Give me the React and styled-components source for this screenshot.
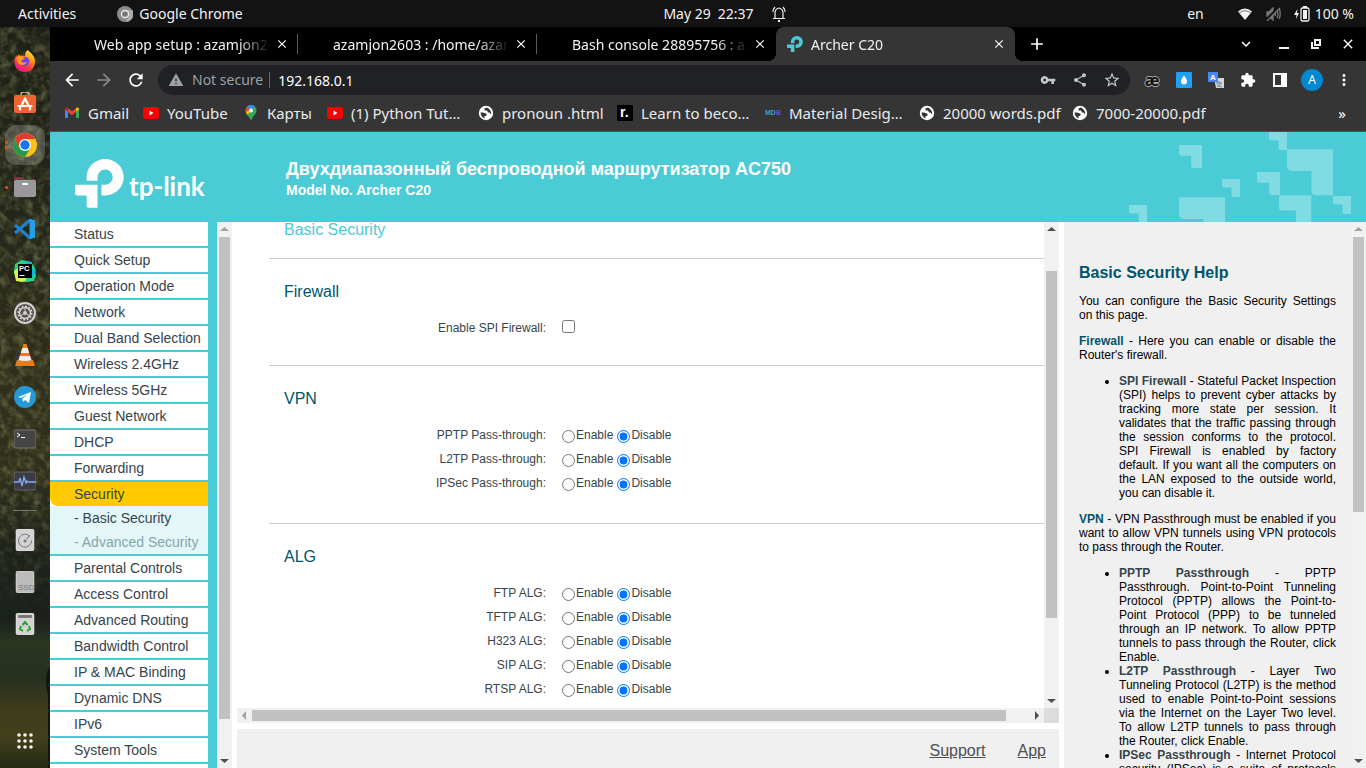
import React from "react";
import styled, { createGlobalStyle, css } from "styled-components";
import {
  MdArrowBack, MdArrowForward, MdRefresh, MdWarning, MdVpnKey, MdShare, MdStarBorder,
  MdExtension, MdMoreVert, MdAdd, MdClose, MdExpandMore,
} from "react-icons/md";

const teal = "#4acbd6";
const uiFont = '"Noto Sans", "Open Sans", sans-serif';
const pageFont = '"Liberation Sans", Arial, sans-serif';

const GlobalStyle = createGlobalStyle`
  * { box-sizing: border-box; }
  body { margin: 0; overflow: hidden; background: #131313; }
  button { border: 0; padding: 0; background: none; color: inherit; font: inherit; }
  svg { display: block; flex: none; }
  ul { margin: 0; padding: 0; }
`;

/* ---------- desktop shell ---------- */

const Desktop = styled.div`
  display: flex;
  flex-direction: column;
  height: 100vh;
  font-family: ${uiFont};
  font-size: 14px;
  color: #f2f2f2;
`;

const TopBar = styled.header`
  display: grid;
  grid-template-columns: 1fr auto 1fr;
  flex: 0 0 27px;
  align-items: center;
  padding: 0 12px 0 18px;
  background: #131313;
  white-space: nowrap;
`;

const BarGroup = styled.div`
  display: flex;
  align-items: center;
  gap: ${(p) => p.$gap || 0}px;
  justify-content: ${(p) => (p.$end ? "flex-end" : "flex-start")};
  padding-left: ${(p) => p.$indent || 0}px;
`;

const AppMenu = styled.button`
  display: flex;
  align-items: center;
  gap: 6px;
`;

const Workspace = styled.div`
  display: flex;
  flex: 1;
  min-height: 0;
`;

const Dock = styled.nav`
  position: relative;
  display: flex;
  flex-direction: column;
  align-items: center;
  flex: 0 0 50px;
  padding: 13px 0 6px;
  overflow: hidden;
  background: linear-gradient(#1e2116 0%, #23261a 25%, #2e2e1b 45%, #2f2f1b 60%, #1c211b 72%, #1b211c 80%, #2b3520 83%, #27301f 88%, #3e3d1c 92%, #413f1b 96%, #242a14 100%);
`;

const Foliage = styled.svg`
  position: absolute;
  inset: 0;
`;

const DockItem = styled.button`
  position: relative;
  display: flex;
  align-items: center;
  justify-content: center;
  flex: 0 0 42px;
  width: 42px;
`;

const DockTile = styled.span`
  display: flex;
  align-items: center;
  justify-content: center;
  width: 40px;
  height: 40px;
  border-radius: 12px;
  background: ${(p) => (p.$active ? "rgba(255,255,255,0.2)" : "none")};
`;

const RunDots = styled.span`
  position: absolute;
  left: 1px;
  display: grid;
  gap: 2px;
  i { width: 3px; height: 3px; border-radius: 50%; background: #e95420; }
`;

const DockDivider = styled.hr`
  position: relative;
  flex: 0 0 1px;
  width: 24px;
  margin: 8px 0;
  border: 0;
  background: #77776c;
`;

const Spacer = styled.div`
  flex: 1;
`;

/* ---------- browser ---------- */

const Browser = styled.section`
  display: flex;
  flex-direction: column;
  flex: 1;
  min-width: 0;
`;

const TabStrip = styled.div`
  display: flex;
  flex: 0 0 34px;
  align-items: center;
  padding: 0 2px 0 9px;
  background: #000;
`;

const Tab = styled.div`
  position: relative;
  display: flex;
  align-items: center;
  flex: 0 1 239px;
  height: 34px;
  min-width: 0;
  padding: 0 8px 0 ${(p) => (p.$active ? 11 : 35)}px;
  border-radius: 8px 8px 0 0;
  ${(p) => p.$active && css`
    background: #353535;
    &::before, &::after {
      content: "";
      position: absolute;
      bottom: 0;
      width: 8px;
      height: 8px;
    }
    &::before { right: 100%; background: radial-gradient(circle at 0 0, #000 8px, #353535 8px); }
    &::after { left: 100%; background: radial-gradient(circle at 100% 0, #000 8px, #353535 8px); }
  `}
  ${(p) => p.$divided && css`
    &::after {
      content: "";
      position: absolute;
      right: 0;
      width: 1px;
      height: 20px;
      background: #5c5c5c;
    }
  `}
`;

const TabTitle = styled.span`
  flex: 1;
  overflow: hidden;
  white-space: nowrap;
  margin: 0 4px 0 ${(p) => (p.$icon ? 8 : 0)}px;
  mask-image: linear-gradient(90deg, #000 82%, transparent);
`;

const IconButton = styled.button`
  display: flex;
  align-items: center;
  justify-content: center;
  flex: 0 0 ${(p) => p.$w || 32}px;
  height: ${(p) => p.$h || 30}px;
  color: ${(p) => p.$color || "#fff"};
`;

const Toolbar = styled.div`
  display: flex;
  align-items: center;
  flex: 0 0 38px;
  padding: 0 6px;
  background: #353535;
`;

const AddressBar = styled.div`
  display: flex;
  align-items: center;
  flex: 1;
  height: 30px;
  margin: 0 6px;
  padding: 0 2px 0 10px;
  border-radius: 15px;
  background: #202124;
`;

const SecurityChip = styled.button`
  display: flex;
  align-items: center;
  gap: 8px;
  padding-right: 6px;
  border-right: 1px solid #6a6b6e;
  line-height: 16px;
  color: #9aa0a6;
  white-space: nowrap;
`;

const UrlInput = styled.input`
  flex: 1;
  min-width: 0;
  padding: 0 0 0 8px;
  border: 0;
  outline: 0;
  background: none;
  color: #fff;
  font: inherit;
`;

const Avatar = styled.span`
  width: 22px;
  height: 22px;
  border-radius: 50%;
  background: #0288d1;
  font-size: 12px;
  line-height: 22px;
  text-align: center;
`;

const AshIcon = styled.span`
  color: #111;
  font-size: 16px;
  font-weight: 700;
  line-height: 20px;
  text-shadow: 1px 0 #aaa, -1px 0 #aaa, 0 1px #aaa, 0 -1px #aaa;
`;

const Bookmarks = styled.nav`
  display: flex;
  align-items: center;
  flex: 0 0 33px;
  padding: 0 8px 4px 14px;
  border-bottom: 1px solid #555;
  background: #353535;
  font-size: 15px;
`;

const Bookmark = styled.a`
  display: flex;
  align-items: center;
  flex: 0 1 ${(p) => p.$w}px;
  gap: 8px;
  min-width: 0;
  color: #e8eaed;
  text-decoration: none;
  white-space: nowrap;
`;

/* ---------- router page ---------- */

const Banner = styled.header`
  display: flex;
  flex: 0 0 90px;
  align-items: center;
  padding-right: 15px;
  background: ${teal};
  color: #fff;
  font-family: ${pageFont};
`;

const Brand = styled.div`
  display: flex;
  align-items: center;
  gap: 5px;
  flex: 0 0 236px;
  padding: 13px 0 0 25px;
`;

const BrandName = styled.span`
  padding-top: 4px;
  font-family: Lato, sans-serif;
  font-size: 26px;
  line-height: 32px;
  font-weight: 700;
`;

const Model = styled.div`
  flex: 1;
  padding-top: 3px;
  font-weight: 700;
  white-space: nowrap;
  h1 { margin: 0; font-size: 18px; line-height: 22px; }
  p { margin: 0; font-size: 14px; line-height: 20px; }
`;

const Frames = styled.div`
  display: grid;
  grid-template-columns: 182px minmax(0, 1fr) 302px;
  grid-template-rows: minmax(0, 1fr);
  flex: 1;
  min-height: 0;
  background: #fff;
  color: #36444b;
  font-family: ${pageFont};
`;

const MenuFrame = styled.aside`
  display: flex;
  min-height: 0;
  background: ${teal};
`;

const Menu = styled.ul`
  flex: 1;
  margin-right: 9px;
  overflow: hidden;
  list-style: none;
`;

const MenuItem = styled.li`
  border-bottom: ${(p) => (p.$open ? 0 : 2)}px solid ${teal};
  background: ${(p) => (p.$sub ? "#e3f7f9" : "#fff")};
`;

const MenuLink = styled.a`
  display: block;
  height: 24px;
  padding-left: 24px;
  border-radius: ${(p) => (p.$active ? "0 0 0 8px" : 0)};
  background: ${(p) => (p.$active ? "#ffcb00" : "none")};
  color: ${(p) => (p.$muted ? "#86a5aa" : "#36444b")};
  font-size: 14px;
  line-height: 24px;
  text-decoration: none;
  white-space: nowrap;
`;

const Bar = styled.div`
  display: flex;
  align-items: center;
  background: #f1f1f1;
  ${(p) => (p.$across
    ? css`height: 15px; flex: 1;`
    : css`flex: 0 0 15px; width: 15px; flex-direction: column;`)}
`;

const BarArrow = styled.svg`
  flex: 0 0 15px;
  fill: ${(p) => (p.$off ? "#a3a3a3" : "#505050")};
`;

const BarPart = styled.div`
  flex: ${(p) => p.$grow} 1 0;
  ${(p) => (p.$across ? "height" : "width")}: 11px;
  background: ${(p) => (p.$thumb ? "#c1c1c1" : "none")};
`;

const Centre = styled.div`
  display: flex;
  flex-direction: column;
  min-width: 0;
  margin: 0 5px;
`;

const ContentRow = styled.div`
  display: flex;
  flex: 1;
  min-height: 0;
`;

const Content = styled.main`
  flex: 1;
  min-width: 0;
  padding-left: 32px;
  overflow: hidden;
`;

const PageTitle = styled.h2`
  margin: 0;
  padding: 0 15px 18px;
  height: 37px;
  border-bottom: 1px solid #ccc;
  color: ${teal};
  font-size: 16px;
  font-weight: 400;
  line-height: 16px;
`;

const Section = styled.section`
  padding: 23px 0 ${(p) => (p.$compact ? 25 : 28)}px;
  border-bottom: 1px solid #ccc;
  h3 {
    margin: 0 0 14px;
    padding-left: 15px;
    color: #00556b;
    font-size: 16px;
    font-weight: 400;
    line-height: 20px;
  }
`;

const Field = styled.div`
  display: grid;
  grid-template-columns: 277px 1fr;
  column-gap: 16px;
  align-items: center;
  height: 24px;
  font-size: 12px;
`;

const FieldLabel = styled.label`
  text-align: right;
`;

const Choices = styled.div`
  display: flex;
  gap: 4px;
  input { margin: 3px 1px 0 0; }
  label { display: flex; line-height: 16px; }
`;

const Tick = styled.input`
  margin: 0 0 3px;
`;

const BottomBar = styled.div`
  display: flex;
`;

const Corner = styled.div`
  width: 15px;
  height: 15px;
  background: #dcdcdc;
`;

const Footer = styled.footer`
  display: flex;
  justify-content: flex-end;
  gap: 32px;
  flex: 0 0 39px;
  margin-top: 6px;
  padding: 12px 13px 0 0;
  background: #f0f0f0;
  font-size: 16px;
  line-height: 20px;
  a { color: #4f4f4f; }
`;

const HelpFrame = styled.aside`
  display: flex;
  min-height: 0;
  background: #f0f0f0;
`;

const Help = styled.article`
  flex: 1;
  padding: 41px 15px 0;
  overflow: hidden;
  color: #000;
  font-size: 12px;
  line-height: 14px;
  text-align: justify;
  h2 { margin: 0 0 11px; color: #00556b; font-size: 16px; line-height: 20px; }
  p, ul { margin: 0 0 12px; }
  p b { color: #00556b; }
  ul { padding-left: 40px; }
  li b { color: #36444b; }
`;

/* ---------- drawings ---------- */

const Icon = ({ size = 22, children, ...rest }) => (
  <svg width={size} height={size} viewBox="0 0 22 22" aria-hidden="true" {...rest}>{children}</svg>
);

const Firefox = () => (
  <Icon>
    <defs>
      <linearGradient id="ff" x1="0.8" y1="0" x2="0.3" y2="1">
        <stop offset="0" stopColor="#fff44f" /><stop offset="0.35" stopColor="#ff980e" />
        <stop offset="0.7" stopColor="#ff3647" /><stop offset="1" stopColor="#e31587" />
      </linearGradient>
    </defs>
    <path fill="url(#ff)" d="M14 0c1 2 4 3 6 7 3 7-1 15-9 15C4 22 0 17 .5 11c.2-3 1-4 2-6l.4 2L5 4l1 2c2-1 3 0 5 0 0-3 1-5 3-6z" />
    <circle cx="10.500" cy="11.500" r="4.800" fill="#7542e5" />
    <path fill="#ff9a1f" d="M3 7c3-2 6 0 8 1-1 2-3 1-4 3 1 2 4 2 6 1-1 3-5 4-8 2-2-2-3-4-2-7z" />
  </Icon>
);

const Software = () => (
  <Icon>
    <path d="M7 4V2c0-3 8-3 8 0v2" fill="none" stroke="#d8c9a2" strokeWidth="1.300" />
    <rect y="3" width="22" height="18" rx="2" fill="#ee6532" />
    <path d="M11 6.500 7.500 13.500M11 6.500 14.500 13.500M4.500 14h13M6 17.500v-2m10 2v-2" fill="none" stroke="#fff" strokeWidth="2.200" strokeLinecap="round" />
  </Icon>
);

const Chrome = () => (
  <Icon size={24}>
    <circle cx="11" cy="11" r="11" fill="#fbc116" />
    <path fill="#e33b2e" d="M1.500 5.500A11 11 0 0 1 20.500 5.500H11L6.200 13.700z" />
    <path fill="#279847" d="M1.500 5.500A11 11 0 0 0 11 22l4.800-8.200-9.500 0z" />
    <circle cx="11" cy="11" r="5.500" fill="#fff" /><circle cx="11" cy="11" r="4.300" fill="#1a73e8" />
  </Icon>
);

const Files = () => (
  <Icon>
    <path d="M0 3q0-2 2-2h7l2 2h9q2 0 2 2v4H0z" fill="#8e2e45" />
    <rect y="4" width="22" height="17" rx="2" fill="#9b979b" />
    <rect x="8" y="7" width="6" height="2" rx="1" fill="#fff" />
  </Icon>
);

const Code = () => (
  <Icon>
    <path d="m1 7 15 13M1 15 16 2" stroke="#1b84cf" strokeWidth="3" />
    <path d="m15.500.500 5.500 2v17l-5.500 2z" fill="#249ee8" />
  </Icon>
);

const PyCharm = () => (
  <Icon>
    <path d="M1 4 8 0l9 2 4 6 1 9-8 5-11-1-3-8z" fill="#21d789" />
    <path d="m13 1 5 1-1 6 5 2-3 9-7-5z" fill="#0bb7da" /><path d="m0 11 6-4 9 13-7 2-6-1z" fill="#dcf249" />
    <path d="m14 14 7 3-1 4-9 1z" fill="#21d789" />
    <rect x="4" y="4" width="14" height="14" fill="#000" />
    <text x="5" y="11" fill="#fff" fontSize="7.500" fontWeight="700" fontFamily="Liberation Sans, sans-serif">PC</text>
    <path d="M5.500 15.500h5" stroke="#fff" />
  </Icon>
);

const Settings = () => (
  <Icon>
    <circle cx="11" cy="11" r="11" fill="#d4d2d0" /><circle cx="11" cy="11" r="9" fill="#53504e" />
    <circle cx="11" cy="11" r="5.500" fill="none" stroke="#d4d2d0" strokeWidth="1.500" />
    <circle cx="11" cy="11" r="6.800" fill="none" stroke="#d4d2d0" strokeWidth="1.500" strokeDasharray="1.800 1.750" />
    <circle cx="11" cy="11" r="2" fill="#d4d2d0" />
    <path d="M11 5v4M6 14l3.500-2M16 14l-3.500-2" stroke="#d4d2d0" />
  </Icon>
);

const Vlc = () => (
  <Icon>
    <path d="m3 16-2 6h20l-2-6z" fill="#f57900" />
    <path d="M9.500 0h3L18 18q-7 3-14 0z" fill="#f57c0b" />
    <path d="m8.300 4-1.500 5h8.400l-1.500-5zM5.800 12l-1.200 4q6.400 2 12.800 0l-1.200-4z" fill="#eee" />
  </Icon>
);

const Telegram = () => (
  <Icon>
    <circle cx="11" cy="11" r="11" fill="#2599d5" />
    <path d="m4 11 13-5-2 11-4-3-2 2-.5-3.500L14 8l-7 4z" fill="#fff" />
  </Icon>
);

const Terminal = () => (
  <Icon>
    <rect y="2" width="22" height="18" rx="2" fill="#454545" stroke="#777" />
    <path d="m3 5 3 2-3 2M7 9.500h4" fill="none" stroke="#fff" />
  </Icon>
);

const Monitor = () => (
  <Icon>
    <rect y="2" width="22" height="18" rx="2" fill="#3b3c45" stroke="#666" />
    <path d="M0 12h5l1-4 2 8 2-9 2 6 1-2 1 1h8" fill="none" stroke="#87a9f5" strokeWidth="1.300" />
  </Icon>
);

const Disk = ({ kind }) => (
  <Icon>
    <rect x="2" width="18" height="22" rx="2" fill={kind === "ssd" ? "#bcbcbc" : "#d3d3d3"} stroke="#eee" strokeWidth="0.500" />
    {kind === "hdd" && <><circle cx="11" cy="12" r="1.500" fill="#777" /><path d="M16 7.500a6.500 6.500 0 1 0 1.500 4M15.500 6.500l-3 4" fill="none" stroke="#777" strokeWidth="1" /></>}
    {kind === "ssd" && <text x="4" y="19" fontSize="8" fill="#777" fontFamily="Liberation Sans, sans-serif">SSD</text>}
    {kind === "trash" && <>
      <rect x="4" y="2" width="14" height="3" rx="1" fill="#777" />
      <path d="m8.500 12 2.500-3 2.500 3M15 13l1 3-3 2M7 13l-1 3 3 2" fill="none" stroke="#2ba02b" strokeWidth="2" />
    </>}
  </Icon>
);

const AppsGrid = () => (
  <Icon fill="#f4f4ee">
    {[5, 11, 17].map((y) => [5, 11, 17].map((x) => <circle key={`${x}-${y}`} cx={x} cy={y} r="1.800" />))}
  </Icon>
);

const Leaves = () => (
  <Foliage width="50" height="741" aria-hidden="true">
    <defs>
      <filter id="leafNoise" x="0" y="0" width="100%" height="100%">
        <feTurbulence type="fractalNoise" baseFrequency="0.120" numOctaves="3" seed="8" />
        <feColorMatrix values="0.6 0 0 0 -0.06  0.6 0 0 0 -0.06  0.3 0 0 0 -0.05  0 2.4 0 0 -0.900" />
      </filter>
      <linearGradient id="leafFade" x1="0" y1="0" x2="0" y2="1">
        <stop offset="0.800" stopColor="#fff" /><stop offset="1" stopColor="#000" />
      </linearGradient>
      <mask id="leafMask"><rect width="50" height="590" fill="url(#leafFade)" /></mask>
    </defs>
    <g mask="url(#leafMask)"><rect width="50" height="590" filter="url(#leafNoise)" opacity="0.450" /></g>
    <ellipse cx="50" cy="655" rx="4" ry="14" fill="#12180f" /><path d="M48 660h2v81h-2z" fill="#12180f" />
  </Foliage>
);

const tpMark = "M110 153V142A56 55 0 1 1 166 197H155V165H166A23 23 0 1 0 143 142V153ZM75 165H143V234H116Q110 234 110 228V197H83Q75 197 75 189Z";
const TpMark = ({ size, fill }) => (
  <svg width={size} height={size} viewBox="75 87 148 148" fill={fill} aria-hidden="true"><path d={tpMark} /></svg>
);

const corners = [
  [657, 6, 54], [387, 45, 69], [711, 58, 138], [621, 126, 69], [516, 147, 54],
  [687, 196, 97], [849, 198, 54], [387, 202, 138], [237, 225, 54],
];
const Corners = () => (
  <svg width="222" height="90" viewBox="237 6 666 270" fill="#81dbe2" aria-hidden="true">
    {corners.map(([x, y, s]) => {
      const a = s * 0.47, r = s * 0.1;
      return <path key={`${x}-${y}`} d={`M${x} ${y}h${s}v${s}h${r - a}q${-r} 0 ${-r} ${-r}V${y + a}H${x + r}q${-r} 0 ${-r} ${-r}z`} />;
    })}
  </svg>
);

const Bell = () => (
  <svg width="14" height="16" viewBox="0 0 14 16" fill="none" stroke="#f2f2f2" strokeWidth="1.200" aria-hidden="true">
    <path d="M3 12V7q0-4 4-5 4 1 4 5v5M1 12.500h12M1 6q0-3 2-5M13 6q0-3-2-5" /><path d="M6 15h2" strokeWidth="2" />
  </svg>
);
const Wifi = () => (
  <svg width="16" height="14" viewBox="0 0 16 14" aria-hidden="true">
    <path d="M1 4.500Q8-1.500 15 4.500L8 13z" fill="#f2f2f2" />
    <path d="M2.300 6q5.700-4.500 11.400 0" fill="none" stroke="#777" />
  </svg>
);
const Muted = () => (
  <svg width="15" height="14" viewBox="0 0 15 14" fill="none" stroke="#777" strokeWidth="1.300" aria-hidden="true">
    <path d="M1 5h2l4-4v12L3 9H1z" fill="#777" /><path d="M9 5q1 2 0 4M11 3q2 4 0 8M13 1q2.500 6 0 11" />
    <path d="M0 13 13 0" stroke="#131313" strokeWidth="2.500" /><path d="M1 14 14 1" />
  </svg>
);
const Battery = () => (
  <svg width="16" height="16" viewBox="0 0 16 16" aria-hidden="true">
    <path d="M3.500 3 0 9h2.500L2 13l3-6H3z" fill="#f2f2f2" />
    <rect x="7" y="2" width="8" height="13" rx="1.500" fill="none" stroke="#f2f2f2" strokeWidth="1.300" />
    <path d="M9 0h4v2H9zM9 4h4v9H9z" fill="#f2f2f2" />
  </svg>
);
const ChromeGrey = () => (
  <svg width="16" height="16" viewBox="0 0 16 16" aria-hidden="true">
    <circle cx="8" cy="8" r="8" fill="#8b8b8b" /><path d="M8 4h7.500a8 8 0 0 1-7 12l3-6" fill="#aaa" />
    <circle cx="8" cy="8" r="3.500" fill="#777" stroke="#eee" strokeWidth="1.300" />
  </svg>
);
const Restore = () => (
  <svg width="10" height="10" viewBox="0 0 10 10" fill="none" stroke="#f2f2f2" strokeWidth="2" aria-hidden="true">
    <path d="M4 1h5v5H4zM1 3v6h7" />
  </svg>
);
const Drop = () => (
  <svg width="16" height="16" viewBox="0 0 16 16" aria-hidden="true">
    <rect width="16" height="16" rx="1" fill="#20a0f0" /><path d="M8 3.500c1.500 2 3 4 3 6a3 3 0 0 1-6 0c0-2 1.500-4 3-6z" fill="#fff" />
  </svg>
);
const Translate = () => (
  <svg width="16" height="16" viewBox="0 0 16 16" fontFamily="Liberation Sans, sans-serif" aria-hidden="true">
    <path d="M6 6h10v10H8z" fill="#d5d8da" /><path d="M0 0h10v10H0z" fill="#4a86ef" />
    <text x="2" y="8" fontSize="8" fontWeight="700" fill="#fff">A</text>
    <path d="M8 11h6M11 9v2M13 11q-1 3-4 4M9 12q2 3 5 3" fill="none" stroke="#6c8196" />
  </svg>
);
const SidePanel = () => (
  <svg width="14" height="14" viewBox="0 0 14 14" aria-hidden="true"><path d="M0 0h14v14H0zM2 2v10h6V2z" fill="#fff" fillRule="evenodd" /></svg>
);

const favicons = {
  gmail: (
    <svg width="16" height="16" viewBox="0 0 16 16" aria-hidden="true">
      <path d="M1 13V4l3 2.500V13z" fill="#4285f4" /><path d="M12 13V6.500L15 4v9z" fill="#34a853" />
      <path d="M3.800 3 8 6.300 12.200 3v4L8 10.300 3.800 7z" fill="#ea4335" />
      <path d="M1 4q0-2 2-1.500l1 .8v3.400L1 4.500z" fill="#c5221f" /><path d="M15 4q0-2-2-1.500l-1 .8v3.400l3-2.200z" fill="#fbbc04" />
    </svg>
  ),
  youtube: (
    <svg width="16" height="16" viewBox="0 0 16 16" aria-hidden="true">
      <rect y="2" width="16" height="12" rx="3" fill="#f00" /><path d="m6.500 5.500 4 2.500-4 2.500z" fill="#fff" />
    </svg>
  ),
  maps: (
    <svg width="16" height="16" viewBox="0 0 16 16" aria-hidden="true">
      <path d="M8 0a5.500 5.500 0 0 1 5.500 5.500c0 4-4.500 6-5.500 10.500C7 11.500 2.500 9.500 2.500 5.500A5.500 5.500 0 0 1 8 0z" fill="#34a853" />
      <path d="M8 0a5.500 5.500 0 0 0-4.200 2L7 5l5-3.500A5 5 0 0 0 8 0z" fill="#4285f4" />
      <path d="M3.800 2a5.500 5.500 0 0 0-1 5L7 5z" fill="#ea4335" /><path d="m2.800 7 1.700 3L10 4 7 5z" fill="#fbbc04" />
      <circle cx="8" cy="5.500" r="2" fill="#fff" />
    </svg>
  ),
  globe: (
    <svg width="16" height="16" viewBox="0 0 16 16" aria-hidden="true">
      <circle cx="8" cy="8" r="7.200" fill="#fff" />
      <path d="M2.500 7.500H5l3 1q1.500 1 0 2.500H6.500v2.500Q3 12 2.500 7.500zM9 2.500 6.500 3.500v2H9l1 2h1.500l1.500 2q1-4-4-7z" fill="#353535" />
    </svg>
  ),
  roadmap: (
    <svg width="16" height="16" viewBox="0 0 16 16" aria-hidden="true">
      <rect width="16" height="16" rx="1" fill="#000" />
      <text x="3" y="12" fontSize="14" fontWeight="700" fill="#fff" fontFamily="Liberation Sans, sans-serif">r.</text>
    </svg>
  ),
  mdb: (
    <svg width="16" height="16" viewBox="0 0 16 16" aria-hidden="true" fontSize="7" fontWeight="700" fontFamily="Liberation Sans, sans-serif">
      <text x="0" y="10" fill="#2f9fe0">MD</text><text x="11" y="10" fill="#6a4bd0">B</text>
    </svg>
  ),
};

/* ---------- data ---------- */

const dockApps = [
  ["Firefox", <Firefox />], ["Ubuntu Software", <Software />], ["Google Chrome", <Chrome />, 2],
  ["Files", <Files />, 1], ["Visual Studio Code", <Code />], ["PyCharm", <PyCharm />],
  ["Settings", <Settings />], ["VLC", <Vlc />], ["Telegram", <Telegram />],
  ["Terminal", <Terminal />], ["System Monitor", <Monitor />],
];
const dockPlaces = [["Disk", <Disk kind="hdd" />], ["SSD", <Disk kind="ssd" />], ["Trash", <Disk kind="trash" />]];

const tabs = ["Web app setup : azamjon2603", "azamjon2603 : /home/azamjon", "Bash console 28895756 : azam"];

const bookmarks = [
  ["gmail", "Gmail", 79], ["youtube", "YouTube", 100], ["maps", "Карты", 84],
  ["youtube", "(1) Python Tut…", 151], ["globe", "pronoun .html", 139], ["roadmap", "Learn to beco…", 148],
  ["mdb", "Material Desig…", 154], ["globe", "20000 words.pdf", 153], ["globe", "7000-20000.pdf", 160],
];

const menu = [
  ["Status"], ["Quick Setup"], ["Operation Mode"], ["Network"], ["Dual Band Selection"],
  ["Wireless 2.4GHz"], ["Wireless 5GHz"], ["Guest Network"], ["DHCP"], ["Forwarding"],
  ["Security", { active: true, open: true }],
  ["- Basic Security", { sub: true, open: true }],
  ["- Advanced Security", { sub: true, muted: true }],
  ["Parental Controls"], ["Access Control"], ["Advanced Routing"], ["Bandwidth Control"],
  ["IP & MAC Binding"], ["Dynamic DNS"], ["IPv6"], ["System Tools"], ["Logout"],
];

const arrows = { up: "M3 9h9L7.500 5z", down: "M3 6h9L7.500 10z", left: "M9 3v9L5 7.500z", right: "M6 3v9l4-4.500z" };

const Scrollbar = ({ across, parts, startOff }) => (
  <Bar $across={across} aria-hidden="true">
    <BarArrow $off={startOff} width="15" height="15"><path d={across ? arrows.left : arrows.up} /></BarArrow>
    {parts.map((n, i) => <BarPart key={i} $grow={n} $across={across} $thumb={i === 1} />)}
    <BarArrow width="15" height="15"><path d={across ? arrows.right : arrows.down} /></BarArrow>
  </Bar>
);

const DockButton = ({ name, icon, dots = 0 }) => (
  <DockItem aria-label={name}>
    {dots > 0 && <RunDots>{Array.from({ length: dots }, (_, i) => <i key={i} />)}</RunDots>}
    <DockTile $active={dots === 2}>{icon}</DockTile>
  </DockItem>
);

const Toggle = ({ name }) => (
  <Field role="radiogroup" aria-label={name}>
    <FieldLabel as="span">{name}:</FieldLabel>
    <Choices>
      <label><input type="radio" name={name} />Enable</label>
      <label><input type="radio" name={name} defaultChecked />Disable</label>
    </Choices>
  </Field>
);

export default function App() {
  return (
    <Desktop>
      <GlobalStyle />
      <TopBar>
        <BarGroup $gap={41}>
          <button>Activities</button>
          <AppMenu><ChromeGrey />Google Chrome</AppMenu>
        </BarGroup>
        <BarGroup $gap={18} $indent={77}><span>May 29&ensp;22:37</span><Bell /></BarGroup>
        <BarGroup $end $gap={13}>
          <BarGroup $gap={33}><span>en</span><Wifi /></BarGroup>
          <Muted />
          <BarGroup $gap={5}><Battery /><span>100 %</span></BarGroup>
        </BarGroup>
      </TopBar>

      <Workspace>
        <Dock aria-label="Dock">
          <Leaves />
          {dockApps.map(([name, icon, dots]) => <DockButton key={name} name={name} icon={icon} dots={dots} />)}
          <DockDivider />
          {dockPlaces.map(([name, icon]) => <DockButton key={name} name={name} icon={icon} />)}
          <Spacer />
          <DockButton name="Show applications" icon={<AppsGrid />} />
        </Dock>

        <Browser>
          <TabStrip>
            {tabs.map((t, i) => (
              <Tab key={t} $divided={i < 2}>
                <TabTitle>{t}</TabTitle>
                <IconButton $w={16} aria-label="Close tab"><MdClose size={14} /></IconButton>
              </Tab>
            ))}
            <Tab $active>
              <TpMark size={16} fill={teal} />
              <TabTitle $icon>Archer C20</TabTitle>
              <IconButton $w={16} aria-label="Close tab"><MdClose size={14} /></IconButton>
            </Tab>
            <IconButton $w={44} aria-label="New tab"><MdAdd size={20} /></IconButton>
            <Spacer />
            <IconButton $w={44} aria-label="Search tabs"><MdExpandMore size={18} /></IconButton>
            <IconButton aria-label="Minimize"><svg width="10" height="10"><path d="M0 8h10v2H0z" fill="#f2f2f2" /></svg></IconButton>
            <IconButton aria-label="Restore"><Restore /></IconButton>
            <IconButton aria-label="Close"><MdClose size={16} /></IconButton>
          </TabStrip>

          <Toolbar>
            <IconButton aria-label="Back"><MdArrowBack size={20} /></IconButton>
            <IconButton $color="#8a8a8a" aria-label="Forward"><MdArrowForward size={20} /></IconButton>
            <IconButton aria-label="Reload"><MdRefresh size={20} /></IconButton>
            <AddressBar>
              <SecurityChip><MdWarning size={16} />Not secure</SecurityChip>
              <UrlInput aria-label="Address" defaultValue="192.168.0.1" />
              <IconButton $color="#c3c5c8" aria-label="Passwords"><MdVpnKey size={16} /></IconButton>
              <IconButton $color="#c3c5c8" aria-label="Share"><MdShare size={16} /></IconButton>
              <IconButton $color="#c3c5c8" aria-label="Bookmark"><MdStarBorder size={18} /></IconButton>
            </AddressBar>
            <IconButton aria-label="Ash extension"><AshIcon>æ</AshIcon></IconButton>
            <IconButton aria-label="Drop extension"><Drop /></IconButton>
            <IconButton aria-label="Translate"><Translate /></IconButton>
            <IconButton aria-label="Extensions"><MdExtension size={16} /></IconButton>
            <IconButton aria-label="Side panel"><SidePanel /></IconButton>
            <IconButton aria-label="Profile"><Avatar>A</Avatar></IconButton>
            <IconButton aria-label="Menu"><MdMoreVert size={18} /></IconButton>
          </Toolbar>

          <Bookmarks aria-label="Bookmarks">
            {bookmarks.map(([icon, label, w]) => <Bookmark key={label} href="#" $w={w}>{favicons[icon]}{label}</Bookmark>)}
            <Spacer />
            <IconButton $h={24} aria-label="More bookmarks">»</IconButton>
          </Bookmarks>

          <Banner>
            <Brand><TpMark size={49} fill="#fff" /><BrandName>tp-link</BrandName></Brand>
            <Model>
              <h1>Двухдиапазонный беспроводной маршрутизатор AC750</h1>
              <p>Model No. Archer C20</p>
            </Model>
            <Corners />
          </Banner>

          <Frames>
            <MenuFrame>
              <Menu>
                {menu.map(([label, o = {}]) => (
                  <MenuItem key={label} $open={o.open} $sub={o.sub}>
                    <MenuLink href="#" $active={o.active} $muted={o.muted}>{label}</MenuLink>
                  </MenuItem>
                ))}
              </Menu>
              <Scrollbar parts={[0, 482, 34]} startOff />
            </MenuFrame>

            <Centre>
              <ContentRow>
                <Content>
                  <PageTitle>Basic Security</PageTitle>
                  <Section $compact>
                    <h3>Firewall</h3>
                    <Field>
                      <FieldLabel htmlFor="spi">Enable SPI Firewall:</FieldLabel>
                      <div><Tick id="spi" type="checkbox" /></div>
                    </Field>
                  </Section>
                  <Section>
                    <h3>VPN</h3>
                    {["PPTP", "L2TP", "IPSec"].map((n) => <Toggle key={n} name={`${n} Pass-through`} />)}
                  </Section>
                  <Section>
                    <h3>ALG</h3>
                    {["FTP", "TFTP", "H323", "SIP", "RTSP"].map((n) => <Toggle key={n} name={`${n} ALG`} />)}
                  </Section>
                </Content>
                <Scrollbar parts={[34, 347, 75]} />
              </ContentRow>
              <BottomBar><Scrollbar across parts={[0, 754, 23]} startOff /><Corner /></BottomBar>
              <Footer><a href="#">Support</a><a href="#">App</a></Footer>
            </Centre>

            <HelpFrame>
              <Help>
                <h2>Basic Security Help</h2>
                <p>You can configure the Basic Security Settings on this page.</p>
                <p><b>Firewall</b> - Here you can enable or disable the Router's firewall.</p>
                <ul>
                  <li><b>SPI Firewall</b> - Stateful Packet Inspection (SPI) helps to prevent cyber attacks by tracking more state per session. It validates that the traffic passing through the session conforms to the protocol. SPI Firewall is enabled by factory default. If you want all the computers on the LAN exposed to the outside world, you can disable it.</li>
                </ul>
                <p><b>VPN</b> - VPN Passthrough must be enabled if you want to allow VPN tunnels using VPN protocols to pass through the Router.</p>
                <ul>
                  <li><b>PPTP Passthrough</b> - PPTP Passthrough. Point-to-Point Tunneling Protocol (PPTP) allows the Point-to-Point Protocol (PPP) to be tunneled through an IP network. To allow PPTP tunnels to pass through the Router, click Enable.</li>
                  <li><b>L2TP Passthrough</b> - Layer Two Tunneling Protocol (L2TP) is the method used to enable Point-to-Point sessions via the Internet on the Layer Two level. To allow L2TP tunnels to pass through the Router, click Enable.</li>
                  <li><b>IPSec Passthrough</b> - Internet Protocol security (IPSec) is a suite of protocols for ensuring private, secure communications.</li>
                </ul>
              </Help>
              <Scrollbar parts={[0, 275, 241]} startOff />
            </HelpFrame>
          </Frames>
        </Browser>
      </Workspace>
    </Desktop>
  );
}
